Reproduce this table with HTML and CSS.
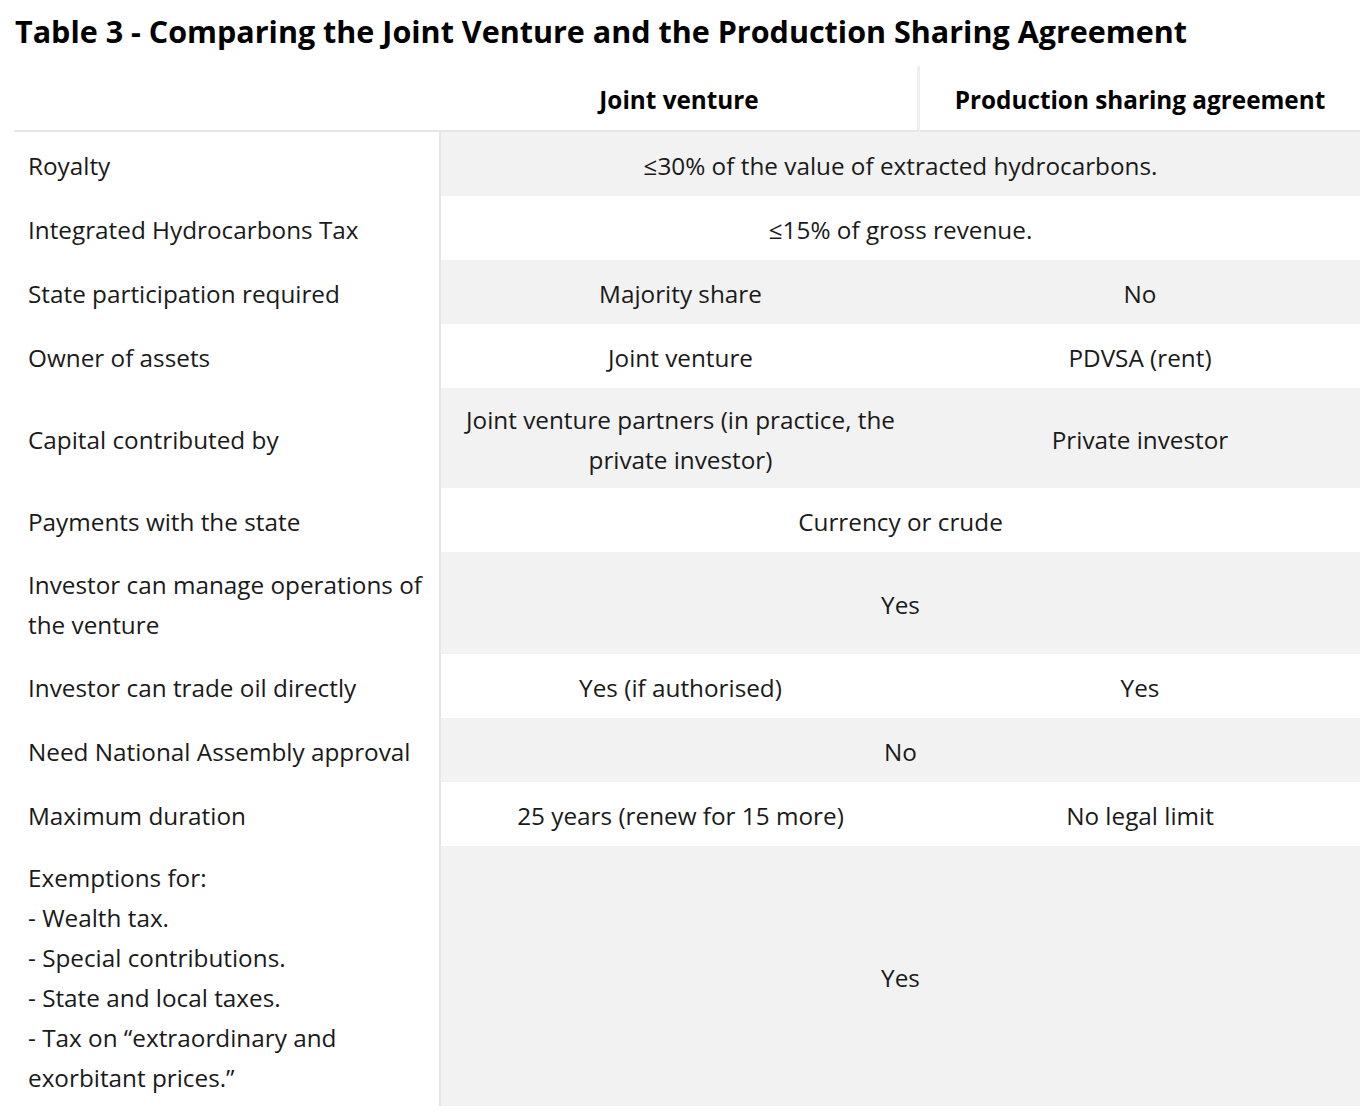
FILE: index.html
```html
<!DOCTYPE html>
<html lang="en">
<head>
<meta charset="utf-8">
<title>Table 3</title>
<link rel="stylesheet" href="styles.css">
</head>
<body>
<div class="page">
  <h1 class="title">Table 3 - Comparing the Joint Venture and the Production Sharing Agreement</h1>
  <table class="cmp">
    <colgroup>
      <col class="c1">
      <col class="c2">
      <col class="c3">
    </colgroup>
    <thead>
      <tr class="head">
        <th class="h-empty"></th>
        <th class="h-jv">Joint venture</th>
        <th class="h-psa">Production sharing agreement</th>
      </tr>
    </thead>
    <tbody>
      <tr class="odd"><td class="lbl">Royalty</td><td class="val" colspan="2">≤30% of the value of extracted hydrocarbons.</td></tr>
      <tr class="even"><td class="lbl">Integrated Hydrocarbons Tax</td><td class="val" colspan="2">≤15% of gross revenue.</td></tr>
      <tr class="odd"><td class="lbl">State participation required</td><td class="val">Majority share</td><td class="val">No</td></tr>
      <tr class="even"><td class="lbl">Owner of assets</td><td class="val">Joint venture</td><td class="val">PDVSA (rent)</td></tr>
      <tr class="odd"><td class="lbl">Capital contributed by</td><td class="val">Joint venture partners (in practice, the private investor)</td><td class="val">Private investor</td></tr>
      <tr class="even"><td class="lbl">Payments with the state</td><td class="val" colspan="2">Currency or crude</td></tr>
      <tr class="odd"><td class="lbl lbl-2">Investor can manage operations of the venture</td><td class="val" colspan="2">Yes</td></tr>
      <tr class="even"><td class="lbl">Investor can trade oil directly</td><td class="val">Yes (if authorised)</td><td class="val">Yes</td></tr>
      <tr class="odd"><td class="lbl">Need National Assembly approval</td><td class="val" colspan="2">No</td></tr>
      <tr class="even"><td class="lbl">Maximum duration</td><td class="val">25 years (renew for 15 more)</td><td class="val">No legal limit</td></tr>
      <tr class="odd"><td class="lbl">Exemptions for:<br>- Wealth tax.<br>- Special contributions.<br>- State and local taxes.<br>- Tax on “extraordinary and<br>exorbitant prices.”</td><td class="val" colspan="2">Yes</td></tr>
    </tbody>
  </table>
</div>
</body>
</html>
```

FILE: styles.css
```css
html, body {
  margin: 0;
  padding: 0;
  background: #ffffff;
}

body {
  font-family: "Open Sans", "Liberation Sans", sans-serif;
  color: #1a1a1a;
}

.page {
  padding: 0 10px 0 14px;
}

.title {
  margin: 11px 0 14px 1px;
  font-size: 30.5px;
  font-weight: 700;
  line-height: 41px;
  color: #000;
}

.cmp {
  border-collapse: separate;
  border-spacing: 0;
  table-layout: fixed;
  width: 1346px;
  font-size: 24.3px;
  line-height: 40px;
}

.c1 { width: 427px; }
.c2 { width: 479px; }
.c3 { width: 440px; }

.head th {
  height: 66px;
  padding: 4px 0 0;
  box-sizing: border-box;
  font-weight: 700;
  text-align: center;
  vertical-align: middle;
  color: #000;
  border-bottom: 2px solid #e6e6e6;
}

.h-jv {
  border-right: 3px solid #f0f0f0;
}

.cmp td {
  height: 64px;
  box-sizing: border-box;
  padding: 12px 10px 8px;
  vertical-align: middle;
}

.cmp td.lbl {
  padding-left: 14px;
  padding-right: 8px;
  text-align: left;
  border-right: 2px solid #e6e6e6;
  background: #fff;
}

.cmp td.lbl-2 {
  padding-top: 13px;
  padding-bottom: 9px;
}

.val {
  text-align: center;
}

.odd .val {
  background: #f2f2f2;
}

.even .val {
  background: #fff;
}
```
